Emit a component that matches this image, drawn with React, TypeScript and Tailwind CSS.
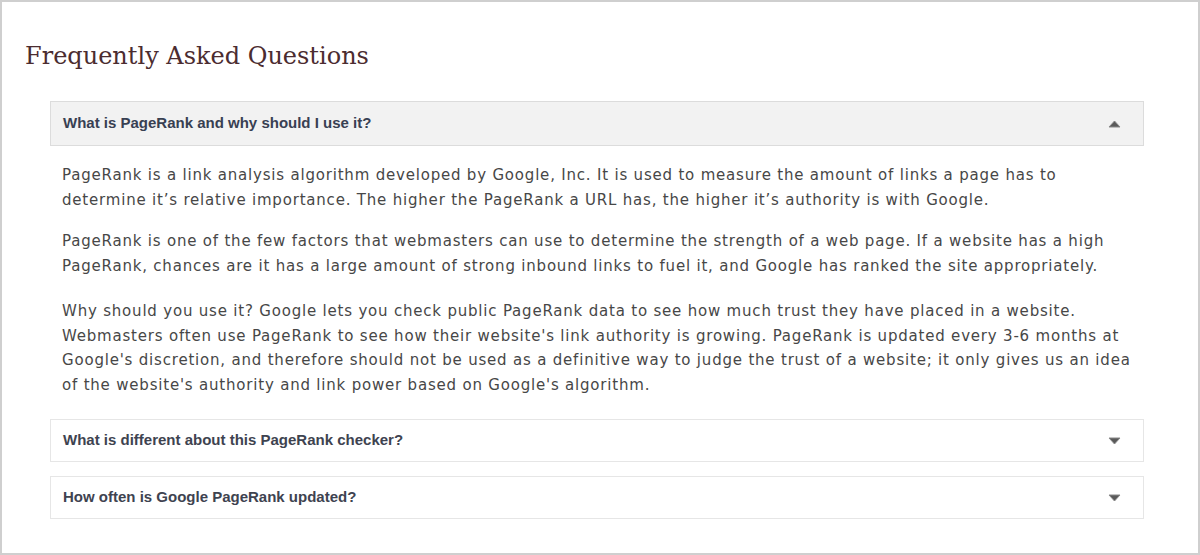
import React from "react";

const Caret = ({ up }: { up?: boolean }) => (
  <svg width="13" height="8" viewBox="0 0 13 8" className="shrink-0">
    {up ? (
      <polygon points="6.5,1 12,7 1,7" fill="#5a5a5a" stroke="#888" strokeWidth="1" />
    ) : (
      <polygon points="1,1 12,1 6.5,7" fill="#5a5a5a" stroke="#888" strokeWidth="1" />
    )}
  </svg>
);

const qFont = { fontFamily: "'Liberation Sans', Arial, sans-serif" };

export default function App() {
  return (
    <div className="w-[1200px] h-[555px] bg-white border-2 border-[#cfcfcf] box-border pl-[23px] pr-[54px]">
      <h1
        className="text-[#4b2c30] text-[24px] mt-[37px] leading-[34px]"
        style={{ fontFamily: "'DejaVu Serif', Georgia, serif" }}
      >
        Frequently Asked Questions
      </h1>
      <div className="ml-[25px] mt-[28px] flex flex-col">
        <div className="h-[45px] bg-[#f2f2f2] border border-[#dcdcdc] flex items-center justify-between pl-[12px] pr-[22px]">
          <span className="text-[15px] font-bold text-[#384052]" style={qFont}>
            What is PageRank and why should I use it?
          </span>
          <Caret up />
        </div>
        <div
          className="pl-[12px] pr-[10px] pt-[17px] text-[15px] tracking-[0.8px] leading-[25px] text-[#474747] flex flex-col"
          style={{ fontFamily: "'DejaVu Sans', Verdana, sans-serif" }}
        >
          <p>
            PageRank is a link analysis algorithm developed by Google, Inc. It is used to measure the amount of links a page has to determine it’s relative importance. The higher the PageRank a URL has, the higher it’s authority is with Google.
          </p>
          <p className="mt-[16px]">
            PageRank is one of the few factors that webmasters can use to determine the strength of a web page. If a website has a high PageRank, chances are it has a large amount of strong inbound links to fuel it, and Google has ranked the site appropriately.
          </p>
          <p className="mt-[20px] leading-[24.5px]">
            Why should you use it? Google lets you check public PageRank data to see how much trust they have placed in a website. Webmasters often use PageRank to see how their website's link authority is growing. PageRank is updated every 3-6 months at Google's discretion, and therefore should not be used as a definitive way to judge the trust of a website; it only gives us an idea of the website's authority and link power based on Google's algorithm.
          </p>
        </div>
        <div className="mt-[22px] h-[43px] bg-white border border-[#e6e6e6] flex items-center justify-between pl-[12px] pr-[22px]">
          <span className="text-[15px] font-bold text-[#3e4350]" style={qFont}>
            What is different about this PageRank checker?
          </span>
          <Caret />
        </div>
        <div className="mt-[14px] h-[43px] bg-white border border-[#e6e6e6] flex items-center justify-between pl-[12px] pr-[22px]">
          <span className="text-[15px] font-bold text-[#3e4350]" style={qFont}>
            How often is Google PageRank updated?
          </span>
          <Caret />
        </div>
      </div>
    </div>
  );
}
